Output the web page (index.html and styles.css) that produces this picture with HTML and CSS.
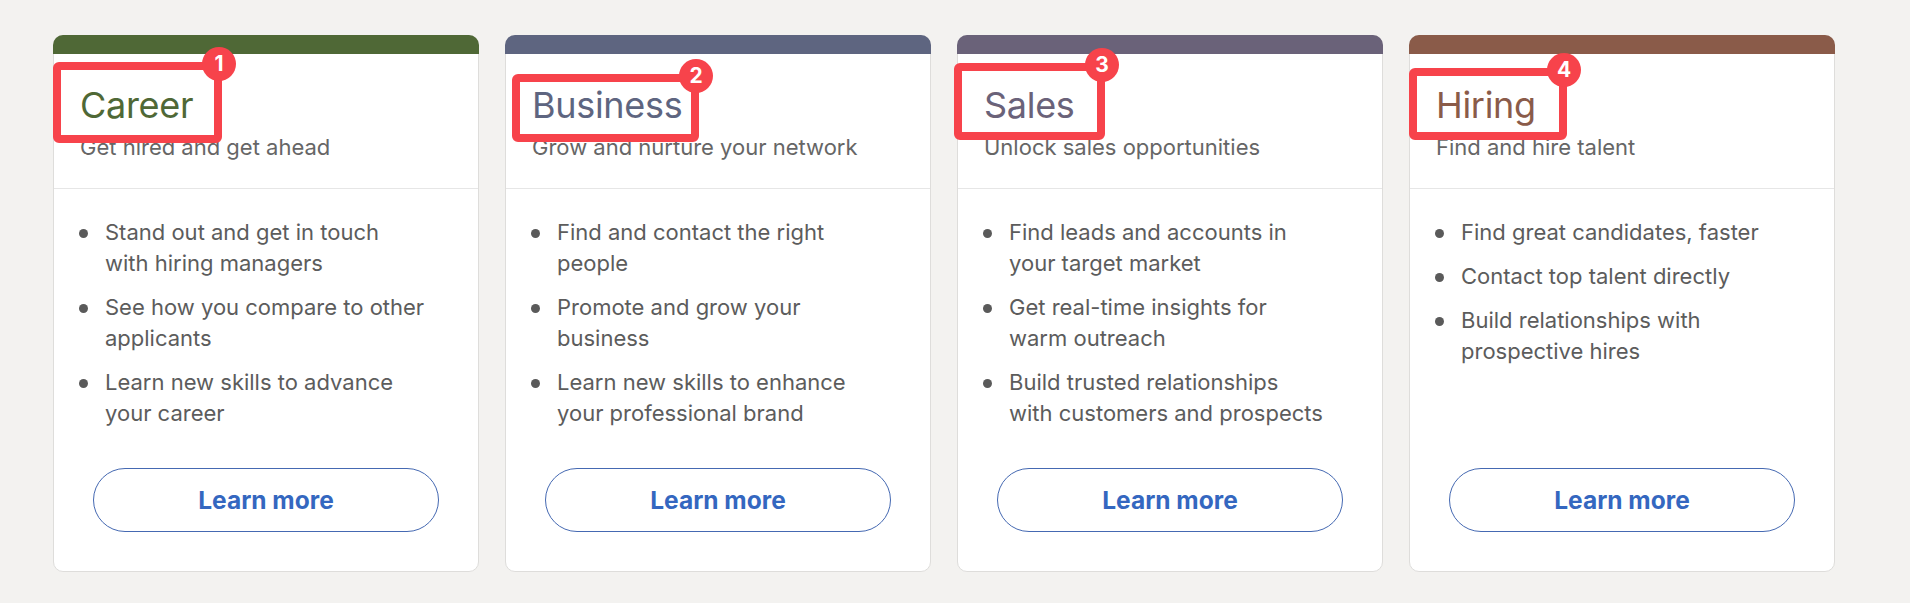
FILE: index.html
```html
<!DOCTYPE html>
<html lang="en">
<head>
<meta charset="utf-8">
<title>Products</title>
<link rel="stylesheet" href="styles.css">
</head>
<body>
<main class="cards">
  <section class="card card-career">
    <div class="card-bar"></div>
    <header class="card-head">
      <h2 class="card-title">Career</h2>
      <p class="card-sub">Get hired and get ahead</p>
    </header>
    <ul class="card-list">
      <li>Stand out and get in touch<br>with hiring managers</li>
      <li>See how you compare to other<br>applicants</li>
      <li>Learn new skills to advance<br>your career</li>
    </ul>
    <a class="card-btn" href="#">Learn more</a>
    <div class="mark mark-1"><span class="badge">1</span></div>
  </section>
  <section class="card card-business">
    <div class="card-bar"></div>
    <header class="card-head">
      <h2 class="card-title">Business</h2>
      <p class="card-sub">Grow and nurture your network</p>
    </header>
    <ul class="card-list">
      <li>Find and contact the right<br>people</li>
      <li>Promote and grow your<br>business</li>
      <li>Learn new skills to enhance<br>your professional brand</li>
    </ul>
    <a class="card-btn" href="#">Learn more</a>
    <div class="mark mark-2"><span class="badge">2</span></div>
  </section>
  <section class="card card-sales">
    <div class="card-bar"></div>
    <header class="card-head">
      <h2 class="card-title">Sales</h2>
      <p class="card-sub">Unlock sales opportunities</p>
    </header>
    <ul class="card-list">
      <li>Find leads and accounts in<br>your target market</li>
      <li>Get real-time insights for<br>warm outreach</li>
      <li>Build trusted relationships<br>with customers and prospects</li>
    </ul>
    <a class="card-btn" href="#">Learn more</a>
    <div class="mark mark-3"><span class="badge">3</span></div>
  </section>
  <section class="card card-hiring">
    <div class="card-bar"></div>
    <header class="card-head">
      <h2 class="card-title">Hiring</h2>
      <p class="card-sub">Find and hire talent</p>
    </header>
    <ul class="card-list">
      <li>Find great candidates, faster</li>
      <li>Contact top talent directly</li>
      <li>Build relationships with<br>prospective hires</li>
    </ul>
    <a class="card-btn" href="#">Learn more</a>
    <div class="mark mark-4"><span class="badge">4</span></div>
  </section>
</main>
</body>
</html>
```

FILE: styles.css
```css
* { box-sizing: border-box; }

html, body {
  margin: 0;
  padding: 0;
  background: #f3f2f0;
  font-family: Inter, "Open Sans", "Liberation Sans", sans-serif;
}

.cards {
  display: flex;
  gap: 26px;
  padding: 35px 0 0 53px;
  align-items: stretch;
}

.card {
  position: relative;
  width: 426px;
  height: 537px;
  background: #ffffff;
  border: 1px solid #dedddb;
  border-radius: 10px;
  display: flex;
  flex-direction: column;
}

.card-bar {
  height: 19px;
  margin: -1px -1px 0;
  border-radius: 10px 10px 0 0;
  flex: none;
}

.card-career { --accent: #4f6836; }
.card-business { --accent: #5e6580; }
.card-sales { --accent: #6a6279; }
.card-hiring { --accent: #8a5b49; }

.card-bar { background: var(--accent); }

.card-head {
  padding: 29px 26px 27px;
  border-bottom: 1px solid #e6e6e6;
}

.card-title {
  margin: 0;
  font-size: 36px;
  line-height: 44px;
  font-weight: 400;
  color: var(--accent);
  letter-spacing: -0.3px;
}

.card-sub {
  margin: 6px 0 0;
  font-size: 22px;
  line-height: 28px;
  color: #666666;
}

.card-list {
  list-style: none;
  margin: 0;
  padding: 28px 20px 0 25px;
  display: flex;
  flex-direction: column;
  gap: 13px;
}

.card-list li {
  display: flex;
  gap: 17px;
  font-size: 22px;
  line-height: 31px;
  color: #5c5c5c;
  white-space: nowrap;
}

.card-list li::before {
  content: "";
  flex: none;
  width: 9px;
  height: 9px;
  margin-top: 12px;
  border-radius: 50%;
  background: #5a5a5a;
}

.card-btn {
  margin: auto 39px 39px;
  height: 64px;
  border: 1.5px solid #4569b2;
  border-radius: 32px;
  display: flex;
  align-items: center;
  justify-content: center;
  font-size: 24.5px;
  font-weight: 700;
  color: #3467c0;
  text-decoration: none;
}

.mark {
  position: absolute;
  border: 8px solid #f7434b;
  border-radius: 6px;
}

.mark-1 { left: -1px; top: 26px; width: 169px; height: 81px; }
.mark-2 { left: 6px; top: 38px; width: 187px; height: 68px; }
.mark-3 { left: -4px; top: 27px; width: 151px; height: 77px; }
.mark-4 { left: -1px; top: 32px; width: 158px; height: 72px; }

.badge {
  position: absolute;
  right: -22px;
  top: -23px;
  width: 34px;
  height: 34px;
  border-radius: 50%;
  background: #f7434b;
  color: #ffffff;
  font-size: 21px;
  font-weight: 700;
  line-height: 34px;
  text-align: center;
}
```
